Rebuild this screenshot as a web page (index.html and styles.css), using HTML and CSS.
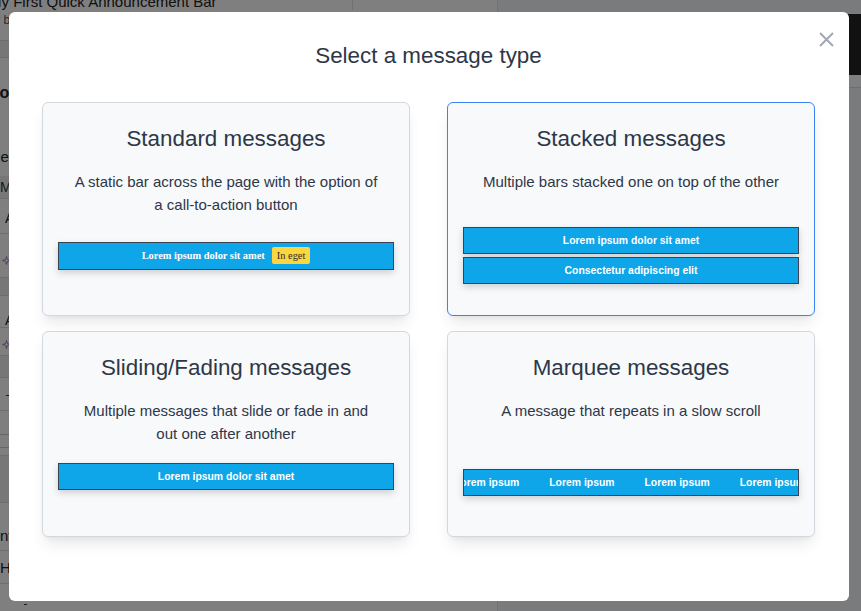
FILE: index.html
```html
<!DOCTYPE html>
<html lang="en">
<head>
<meta charset="utf-8">
<title>Select a message type</title>
<link rel="stylesheet" href="styles.css">
</head>
<body>
<div class="page">
  <div class="bg-main">
    <div class="bg-head"><span class="bg-head-title">My First Quick Announcement Bar</span></div>
    <div class="bg-row bg-r1"><span class="bg-small">Your bar</span></div>
    <div class="bg-band bg-b1"></div>
    <div class="bg-row bg-pos"><span class="bg-bold">Position</span></div>
    <div class="bg-row bg-msgs"><span class="bg-label">Messages</span></div>
    <div class="bg-band bg-b2"><span class="bg-th">Message</span></div>
    <div class="bg-row bg-item"><span class="bg-item-text">Announcement</span></div>
    <div class="bg-row bg-star"><svg class="bg-star-icon" viewBox="0 0 10 10"><path d="M5 0.5 L6 4 L9.5 5 L6 6 L5 9.5 L4 6 L0.5 5 L4 4 Z"/></svg></div>
    <div class="bg-band bg-b3"></div>
    <div class="bg-row bg-item2"><span class="bg-item-text">Announcement</span></div>
    <div class="bg-row bg-star2"><svg class="bg-star-icon" viewBox="0 0 10 10"><path d="M5 0.5 L6 4 L9.5 5 L6 6 L5 9.5 L4 6 L0.5 5 L4 4 Z"/></svg></div>
    <div class="bg-band bg-b4"></div>
    <div class="bg-row bg-dot"><span class="bg-dash"></span></div>
    <div class="bg-row bg-input"><span class="bg-box"></span></div>
    <div class="bg-band bg-b5"></div>
    <div class="bg-row bg-content"><span class="bg-label bg-cut">Content</span></div>
    <div class="bg-row bg-h"><span class="bg-label">Height</span></div>
    <div class="bg-row bg-last"><span class="bg-dash"></span></div>
  </div>
  <div class="bg-side">
    <div class="bg-dark"></div>
    <div class="bg-light"></div>
  </div>
</div>

<div class="overlay">
  <div class="modal">
    <button class="close" aria-label="Close">
      <svg viewBox="0 0 15 15" width="15" height="15"><path d="M1 1 L14 14 M14 1 L1 14"/></svg>
    </button>
    <h2 class="modal-title">Select a message type</h2>
    <div class="grid">
      <div class="card">
        <h3 class="card-title">Standard messages</h3>
        <p class="card-desc">A static bar across the page with the option of a call-to-action button</p>
        <div class="preview preview-standard">
          <div class="bar bar-serif"><span>Lorem ipsum dolor sit amet</span><span class="cta">In eget</span></div>
        </div>
      </div>
      <div class="card selected">
        <h3 class="card-title">Stacked messages</h3>
        <p class="card-desc">Multiple bars stacked one on top of the other</p>
        <div class="preview preview-stacked">
          <div class="stack">
            <div class="bar">Lorem ipsum dolor sit amet</div>
            <div class="bar">Consectetur adipiscing elit</div>
          </div>
        </div>
      </div>
      <div class="card">
        <h3 class="card-title">Sliding/Fading messages</h3>
        <p class="card-desc">Multiple messages that slide or fade in and out one after another</p>
        <div class="preview preview-sliding">
          <div class="bar">Lorem ipsum dolor sit amet</div>
        </div>
      </div>
      <div class="card">
        <h3 class="card-title">Marquee messages</h3>
        <p class="card-desc">A message that repeats in a slow scroll</p>
        <div class="preview preview-marquee">
          <div class="bar marquee">
            <span class="mq-item mq-first">Lorem ipsum</span>
            <span class="mq-item">Lorem ipsum</span>
            <span class="mq-item">Lorem ipsum</span>
            <span class="mq-item">Lorem ipsum</span>
          </div>
        </div>
      </div>
    </div>
  </div>
</div>
</body>
</html>
```

FILE: styles.css
```css
* { box-sizing: border-box; }

html, body {
  margin: 0;
  padding: 0;
}

body {
  width: 861px;
  height: 611px;
  overflow: hidden;
  background: #fff;
  font-family: "Liberation Sans", Arial, Helvetica, sans-serif;
  color: #2d3748;
}

/* ---------- background page (behind overlay) ---------- */
.page {
  display: flex;
  height: 611px;
}

.bg-main {
  width: 498px;
  flex-shrink: 0;
  background: #fff;
  border-right: 1px solid #e4e4e4;
  overflow: hidden;
  display: flex;
  flex-direction: column;
}

.bg-head {
  margin-top: -6px;
  height: 20px;
  display: flex;
}

.bg-head-title {
  width: 353px;
  border-right: 1px solid #e2e2e2;
  font-size: 15px;
  line-height: 16px;
  color: #222;
  white-space: nowrap;
  text-indent: -11px;
  overflow: hidden;
}

.bg-row {
  border-bottom: 1px solid #ddd;
  flex-shrink: 0;
  white-space: nowrap;
}

.bg-band {
  background: #eeeeee;
  flex-shrink: 0;
  border-bottom: 1px solid #ddd;
}

.bg-r1 { height: 31px; padding-top: 3px; }
.bg-small { font-size: 12px; color: #555; display: block; text-indent: -24px; }
.bg-b1 { height: 17px; }
.bg-pos { height: 66px; padding-top: 26px; border-bottom: 0; }
.bg-bold { font-size: 16px; font-weight: 700; color: #222; display: block; text-indent: -44px; }
.bg-msgs { height: 52px; padding-top: 24px; border-bottom: 0; }
.bg-label { font-size: 15px; color: #222; display: block; text-indent: -52px; }
.bg-b2 { height: 23px; padding-top: 3px; }
.bg-th { font-size: 14px; color: #333; display: block; text-indent: 0; }
.bg-item { height: 35px; padding: 10px 0 0 5px; }
.bg-item-text { font-size: 14px; color: #222; }
.bg-star { height: 44px; padding: 22px 0 0 2px; }
.bg-star-icon { width: 9px; height: 9px; fill: none; stroke: #a070c0; stroke-width: 1; display: block; }
.bg-b3 { height: 18px; }
.bg-item2 { height: 32px; padding: 15px 0 0 5px; }
.bg-star2 { height: 28px; padding: 12px 0 0 2px; }
.bg-b4 { height: 22px; }
.bg-dot { height: 33px; padding: 17px 0 0 6px; }
.bg-dash { display: block; width: 3px; height: 1px; background: #333; }
.bg-input { height: 45px; padding: 23px 0 0 0; }
.bg-box { display: block; width: 60px; height: 14px; border: 1px solid #cfcfcf; background: #fff; margin-left: -40px; }
.bg-b5 { height: 47px; }
.bg-content { height: 48px; padding-top: 24px; }
.bg-cut { text-indent: -40px; }
.bg-h { height: 33px; padding-top: 8px; }
.bg-h .bg-label { text-indent: 0; }
.bg-last { height: 30px; padding: 20px 0 0 24px; border-bottom: 0; }

.bg-side {
  flex: 1;
  background: #f4f6f8;
  padding-top: 14px;
}

.bg-dark {
  height: 61px;
  background: #222;
}

.bg-light {
  height: 13px;
  background: #fff;
  border-bottom: 1px solid #dcdcdc;
}

/* ---------- overlay + modal ---------- */
.overlay {
  position: fixed;
  inset: 0;
  background: rgba(0, 0, 0, 0.5);
  display: flex;
  align-items: flex-start;
  padding: 12px 12px 10px 9px;
}

.modal {
  position: relative;
  width: 840px;
  height: 589px;
  background: #fff;
  border-radius: 6px;
  padding: 30px 34px 0 33px;
}

.close {
  position: absolute;
  top: 20px;
  right: 15px;
  width: 15px;
  height: 15px;
  padding: 0;
  border: 0;
  background: none;
  cursor: pointer;
}

.close svg {
  display: block;
  fill: none;
  stroke: #a0a7b3;
  stroke-width: 1.9;
}

.modal-title {
  margin: 0 0 32px;
  font-size: 22.4px;
  line-height: 28px;
  font-weight: 400;
  text-align: center;
  color: #2d3748;
}

.grid {
  display: grid;
  grid-template-columns: 368px 368px;
  column-gap: 37px;
  row-gap: 15px;
}

.card {
  display: flex;
  flex-direction: column;
  background: #f8f9fb;
  border: 1px solid #d4d7dd;
  border-radius: 6px;
  padding: 21px 15px 0;
  box-shadow: 0 10px 15px -3px rgba(0, 0, 0, 0.09), 0 4px 6px -4px rgba(0, 0, 0, 0.08);
}

.card.selected {
  border-color: #3b82f6;
}

.card-title {
  margin: 0;
  font-size: 22.4px;
  line-height: 30px;
  font-weight: 400;
  text-align: center;
  color: #2d3748;
}

.card-desc {
  margin: 16px 14px 0;
  font-size: 15px;
  line-height: 23px;
  text-align: center;
  color: #2d3748;
}

.preview {
  margin-top: auto;
}

.preview-standard { padding: 26px 0 45px; }
.preview-stacked { padding: 0 0 31px; }
.preview-sliding { padding: 18px 0 46px; }
.preview-marquee { padding: 0 0 40px; }

.bar {
  display: flex;
  justify-content: center;
  align-items: center;
  background: #0ea5e9;
  border: 1px solid #3b4252;
  color: #fff;
  font-size: 10.4px;
  font-weight: 700;
  line-height: 13px;
  padding: 6px 0;
  white-space: nowrap;
  box-shadow: 0 3px 7px rgba(0, 0, 0, 0.17);
}

.bar-serif {
  font-family: "Liberation Serif", "Times New Roman", serif;
  padding: 4px 0 5px;
  gap: 7px;
}

.cta {
  background: #fcd53f;
  color: #2b2b2b;
  font-weight: 400;
  line-height: 13px;
  padding: 2px 5px;
  border-radius: 2px;
}

.stack {
  display: flex;
  flex-direction: column;
  gap: 3px;
}

.marquee {
  justify-content: flex-start;
  overflow: hidden;
  gap: 30px;
}

.mq-item {
  flex-shrink: 0;
}

.mq-first {
  margin-left: -10px;
}
```
